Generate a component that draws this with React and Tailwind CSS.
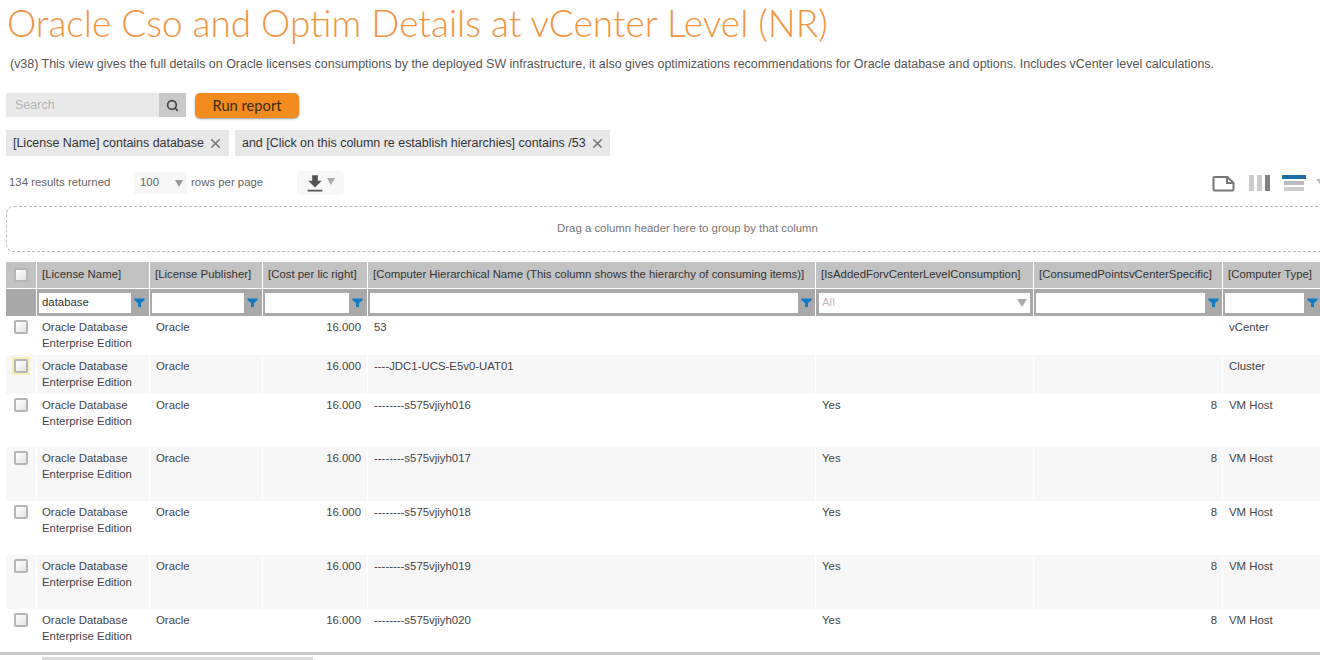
import React from "react";
import { Search, X } from "lucide-react";

const gridCols = "grid grid-cols-[30px_112px_112px_104px_447px_217px_188px_120px] gap-x-px";

const rows = [
  { h: "h-[39px]", name: "53", type: "vCenter", added: "", points: "" },
  { h: "h-[39px]", name: "----JDC1-UCS-E5v0-UAT01", type: "Cluster", added: "", points: "", alt: true, focus: true },
  { h: "h-[53px]", name: "--------s575vjiyh016", type: "VM Host", added: "Yes", points: "8" },
  { h: "h-[54px]", name: "--------s575vjiyh017", type: "VM Host", added: "Yes", points: "8", alt: true },
  { h: "h-[54px]", name: "--------s575vjiyh018", type: "VM Host", added: "Yes", points: "8" },
  { h: "h-[54px]", name: "--------s575vjiyh019", type: "VM Host", added: "Yes", points: "8", alt: true },
  { h: "h-[42px]", name: "--------s575vjiyh020", type: "VM Host", added: "Yes", points: "8" },
];

const headers = [
  "[License Name]",
  "[License Publisher]",
  "[Cost per lic right]",
  "[Computer Hierarchical Name (This column shows the hierarchy of consuming items)]",
  "[IsAddedForvCenterLevelConsumption]",
  "[ConsumedPointsvCenterSpecific]",
  "[Computer Type]",
];

const Funnel = () => (
  <svg viewBox="0 0 12 12" className="w-[11px] h-[11px] shrink-0 ml-[3px]">
    <path d="M0.5 1.5h11v2L7.6 6.6V11H4.4V6.6L0.5 3.5z" fill="#0f7cc4" />
  </svg>
);

const Checkbox = () => (
  <div className="w-[14px] h-[14px] border-2 border-[#b5b5b5] rounded-[2px] bg-gradient-to-br from-[#ffffff] to-[#e4e4e4]" />
);

const FilterCell = ({ value, w }) => (
  <div className="bg-[#a9a9a9] h-[27px] flex items-center pl-[2px]">
    <div className={`${w} h-[20px] bg-white text-[#333] flex items-center pl-[3px]`}>{value}</div>
    <Funnel />
  </div>
);

const App = () => {
  return (
    <div className="w-[1320px] h-[660px] overflow-hidden bg-white relative font-['Liberation_Sans',Arial,sans-serif] text-[11.4px] text-[#444]">
      <h1 className="font-['Lato',sans-serif] font-light text-[36.95px] leading-[44px] text-[#f0953f] pl-[7px] pt-px whitespace-nowrap">
        Oracle Cso and Optim Details at vCenter Level (NR)
      </h1>
      <p className="pl-[10px] mt-[12px] text-[12.44px] leading-[14px] text-[#555] whitespace-nowrap">
        (v38) This view gives the full details on Oracle licenses consumptions by the deployed SW infrastructure, it also gives optimizations recommendations for Oracle database and options. Includes vCenter level calculations.
      </p>

      <div className="flex items-center pl-[6px] mt-[21px] h-[26px]">
        <div className="w-[153px] h-[24px] bg-[#e9e9e9] flex items-center pl-[9px] pt-px text-[#b5b5b5] text-[12.5px]">Search</div>
        <div className="w-[27px] h-[24px] bg-[#c9c9c9] flex items-center justify-center">
          <Search size={13} strokeWidth={3} className="text-[#444]" />
        </div>
        <button className="ml-[9px] w-[104px] h-[25px] rounded-[5px] bg-[#f38b1e] text-[#3a2a10] text-[14.7px] shadow-[0_1px_2px_rgba(0,0,0,0.4)] font-['Lato',sans-serif]">
          Run report
        </button>
      </div>

      <div className="flex pl-[6px] mt-[12px] gap-[6px] text-[12.44px]">
        <div className="h-[26px] bg-[#e8e8e8] flex items-center pl-[7px] w-[223px] text-[#333]">
          <span className="whitespace-nowrap pt-px">[License Name] contains database</span>
          <X size={15} strokeWidth={2.5} className="ml-[4px] text-[#777] shrink-0" />
        </div>
        <div className="h-[26px] bg-[#e8e8e8] flex items-center pl-[7px] w-[375px] text-[#333]">
          <span className="whitespace-nowrap pt-px">and [Click on this column re establish hierarchies] contains /53</span>
          <X size={15} strokeWidth={2.5} className="ml-[4px] text-[#777] shrink-0" />
        </div>
      </div>

      <div className="flex items-center mt-[15px] h-[24px] pl-[9px] text-[#666]">
        <span className="w-[125px] whitespace-nowrap">134 results returned</span>
        <div className="w-[53px] h-[22px] bg-[#f7f7f7] flex items-center justify-between pl-[6px] pr-[4px]">
          100
          <span className="w-0 h-0 border-x-[4px] border-x-transparent border-t-[7px] border-t-[#999]" />
        </div>
        <span className="ml-[4px] whitespace-nowrap">rows per page</span>
        <div className="ml-[34px] w-[47px] h-[24px] bg-[#f7f7f7] rounded-[4px] flex items-center justify-center gap-[3px]">
          <svg viewBox="0 0 16 16" className="w-[18px] h-[18px]">
            <path d="M5.5 1h5v5h3.5L8 12 2 6h3.5z M1.5 14h13v1.5h-13z" fill="#555" />
          </svg>
          <span className="w-0 h-0 border-x-[4px] border-x-transparent border-t-[7px] border-t-[#aaa] -mt-[4px]" />
        </div>
        <div className="ml-auto flex items-center">
          <svg viewBox="0 0 24 17" className="w-[24px] h-[17px]">
            <path d="M2.5 2h13l6 6v6.5a1 1 0 0 1-1 1h-18a1 1 0 0 1-1-1V3a1 1 0 0 1 1-1z M15 2.5v5.5h6" fill="none" stroke="#777" strokeWidth="2" />
          </svg>
          <div className="ml-[13px] flex gap-[3px] h-[16px]">
            <span className="w-[5px] bg-[#ccc]" />
            <span className="w-[5px] bg-[#ccc]" />
            <span className="w-[5px] bg-[#808080]" />
          </div>
          <div className="ml-[12px] flex flex-col gap-[2px] w-[24px] items-center">
            <span className="w-[24px] h-[4px] bg-[#1a6ea8]" />
            <span className="w-[20px] h-[4px] bg-[#bbb]" />
            <span className="w-[20px] h-[4px] bg-[#ccc]" />
          </div>
          <span className="ml-[10px] w-[12px] h-[8px] mr-[-8px] bg-[#bbb] [clip-path:polygon(0_0,100%_0,50%_100%)]" />
        </div>
      </div>

      <div className="ml-[6px] mt-[11px] h-[46px] w-[1340px] border border-dashed border-[#bbb] rounded-[8px] flex items-center justify-center pl-[23px] text-[#777]">
        Drag a column header here to group by that column
      </div>

      <div className="ml-[6px] mt-[10px] w-[1340px]">
        <div className={gridCols}>
          <div className="bg-[#c2c2c2] h-[26px] flex items-center justify-center"><Checkbox /></div>
          {headers.map((label) => (
            <div key={label} className="bg-[#c2c2c2] h-[26px] flex items-center pl-[5px] text-[#333] whitespace-nowrap overflow-hidden">
              {label}
            </div>
          ))}
        </div>
        <div className={`${gridCols} mt-px`}>
          <div className="bg-[#a9a9a9] h-[27px]" />
          <FilterCell value="database" w="w-[92px]" />
          <FilterCell w="w-[92px]" />
          <FilterCell w="w-[84px]" />
          <FilterCell w="w-[428px]" />
          <div className="bg-[#a9a9a9] h-[27px] flex items-center px-[3px]">
            <div className="w-full h-[20px] bg-white flex items-center justify-between px-[3px] text-[#bbb]">
              All
              <span className="w-0 h-0 border-x-[5px] border-x-transparent border-t-[8px] border-t-[#aaa]" />
            </div>
          </div>
          <FilterCell w="w-[169px]" />
          <FilterCell w="w-[79px]" />
        </div>
        {rows.map((row) => {
          const bg = row.alt ? "bg-[#f7f7f7]" : "bg-white";
          const cell = `${bg} ${row.h} pt-[3px] pl-[6px] leading-[16px] text-[#444] whitespace-nowrap`;
          return (
            <div key={row.name} className={gridCols}>
              <div className={`${bg} ${row.h} flex justify-center pt-[4px]`}>
                <div className={row.focus ? "h-[18px] p-[2px] bg-[#fbeeb8] -mt-[2px]" : ""}>
                  <Checkbox />
                </div>
              </div>
              <div className={`${bg} ${row.h} pt-[3px] pl-[5px] leading-[16px] text-[#444] whitespace-nowrap`}>Oracle Database<br />Enterprise Edition</div>
              <div className={cell}>Oracle</div>
              <div className={`${cell} text-right pr-[6px]`}>16.000</div>
              <div className={cell}>{row.name}</div>
              <div className={cell}>{row.added}</div>
              <div className={`${cell} text-right pr-[5px]`}>{row.points}</div>
              <div className={cell}>{row.type}</div>
            </div>
          );
        })}
      </div>

      <div className="absolute left-0 right-0 top-[652px] h-[8px] bg-white">
        <div className="h-[3px] bg-[#c9c9c9]" />
        <div className="ml-[42px] mt-[2px] w-[271px] h-[3px] bg-[#d9d9d9]" />
      </div>
    </div>
  );
};

export default App;
